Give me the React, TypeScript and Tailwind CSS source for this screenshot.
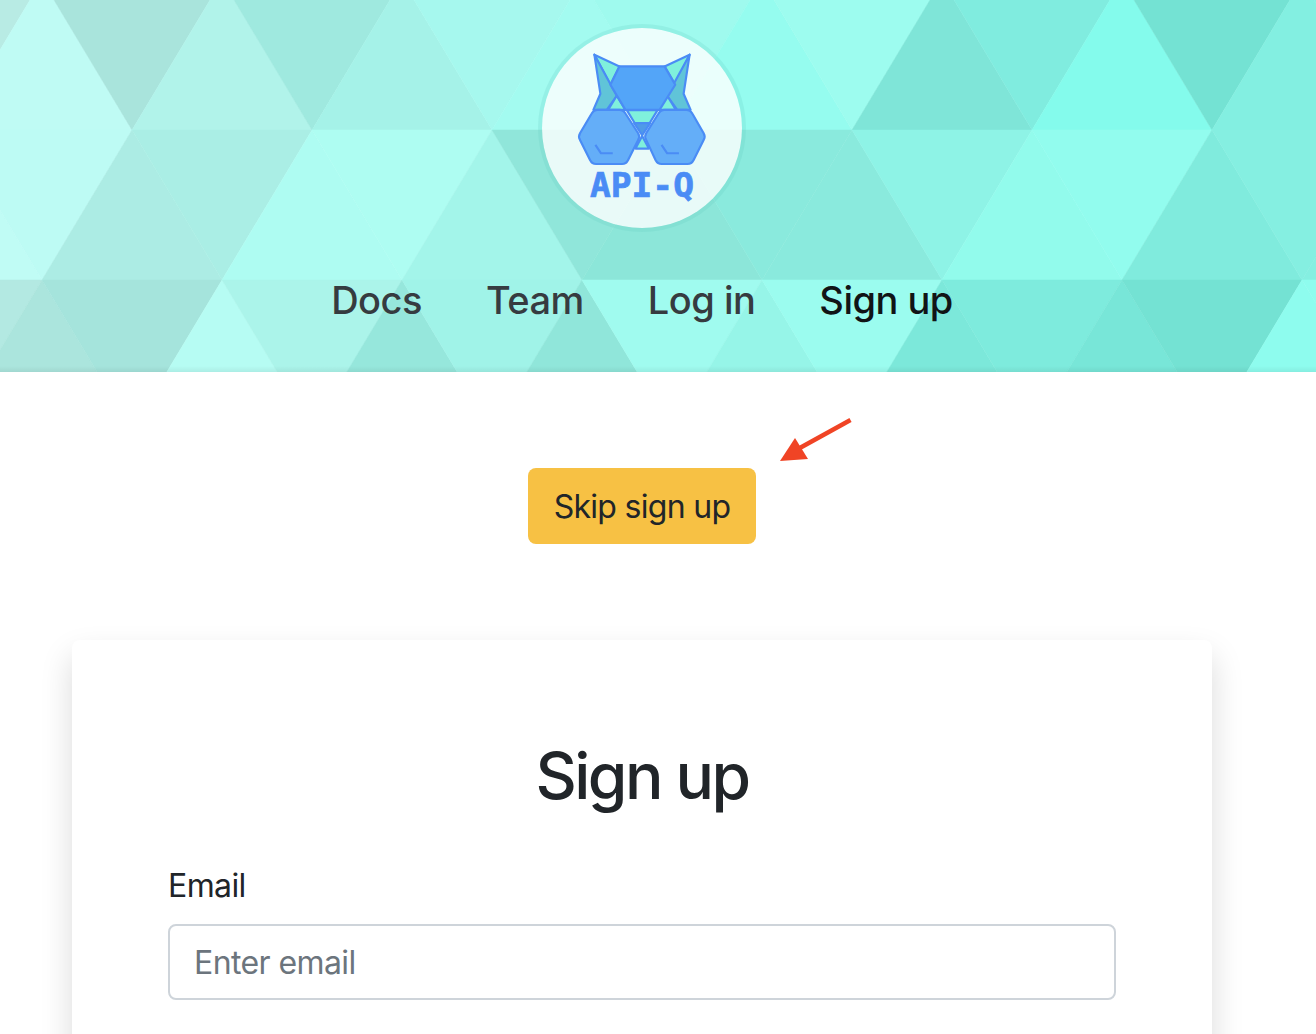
const navItems = [
  { label: 'Docs', active: false },
  { label: 'Team', active: false },
  { label: 'Log in', active: false },
  { label: 'Sign up', active: true },
]

// triangle colours, left to right, one list per row of the header pattern
const rows = [
  { top: -20, startUp: false, colors: ['#b8ebe4', '#bffbf4', '#a9e4dc', '#b1f3ea', '#9fe9df', '#a5f2e8', '#a6f8ee', '#a3fbf0', '#9ffaee', '#95fcef', '#9dfcef', '#7fe5d8', '#80ecdf', '#84fbec', '#74e2d3', '#83efe1', '#83efe1'] },
  { top: 130, startUp: true, colors: ['#c0fcf5', '#bdfbf4', '#acece4', '#aaeee5', '#aefcf2', '#aefdf2', '#a3f5ea', '#90e6da', '#8ce6d9', '#8aeadd', '#8aeadd', '#8ef3e6', '#92fbec', '#92fcee', '#80ebdd', '#85efe1', '#85efe1'] },
  { top: 280, startUp: false, colors: ['#b3e9e2', '#abe5dd', '#a5e4dc', '#b6fcf3', '#abf4ea', '#96e7dc', '#a0f3e8', '#90e6da', '#a0fbef', '#96f5e8', '#9bfcef', '#7ce8da', '#7eebdd', '#78e6d8', '#74e2d3', '#8efcee', '#8efcee'] },
]

function HeaderPattern() {
  return (
    <svg className="absolute inset-0 w-full h-full" viewBox="0 0 1316 372" preserveAspectRatio="none" aria-hidden="true">
      <defs>
        <linearGradient id="edge" x1="0" y1="0" x2="0" y2="1">
          <stop offset="0" stopColor="#000" stopOpacity="0" />
          <stop offset="1" stopColor="#000" stopOpacity="0.06" />
        </linearGradient>
      </defs>
      {rows.map((row) =>
        row.colors.map((color, i) => {
          const apex = -48 + i * 90
          const isUp = i % 2 === (row.startUp ? 0 : 1)
          const tipY = isUp ? row.top : row.top + 150
          const baseY = isUp ? row.top + 150 : row.top
          return (
            <polygon
              key={`${row.top}-${i}`}
              points={`${apex},${tipY} ${apex - 90},${baseY} ${apex + 90},${baseY}`}
              fill={color}
              stroke={color}
              strokeWidth="0.5"
            />
          )
        })
      )}
      <rect x="0" y="366" width="1316" height="6" fill="url(#edge)" />
    </svg>
  )
}

function LogoMark() {
  const stroke = '#4a8cf5'
  return (
    <svg width="132" height="115" viewBox="140 108 395 342" fill="none" aria-hidden="true">
      <g stroke={stroke} strokeWidth="6.5" strokeLinejoin="round">
        {/* ears */}
        <path d="M195 115 L270 150 L243 205 Z" fill="#7ff0dc" />
        <path d="M480 115 L405 150 L437 205 Z" fill="#7ff0dc" />
        <path d="M195 115 L262 238 L232 280 L192 280 L213 232 Z" fill="#60c4d8" />
        <path d="M480 115 L413 238 L443 280 L483 280 L462 232 Z" fill="#60c4d8" />
        <path d="M262 238 L236 280 L288 280 Z" fill="#7ff0dc" />
        <path d="M413 238 L387 280 L439 280 Z" fill="#7ff0dc" />
        {/* head */}
        <path d="M270 150 L405 150 L437 205 L390 280 L288 280 L243 205 Z" fill="#53a5f8" />
        {/* nose */}
        <path d="M292 281 L384 281 L360 320 L316 320 Z" fill="#7ff0dc" />
        <path d="M314 320 L362 320 L338 356 Z" fill="#4f9ae8" />
        <path d="M338 358 L358 396 L318 396 Z" fill="#7ff0dc" />
        {/* eyes */}
        <path d="M205 280 L270 280 Q282 280 288 291 L326 350 Q332 360 326 370 L296 430 Q290 442 278 442 L200 442 Q188 442 182 430 L152 370 Q146 360 152 350 L187 291 Q193 280 205 280 Z" fill="#64aef8" />
        <path d="M405 280 L470 280 Q482 280 488 291 L522 350 Q528 360 522 370 L492 430 Q486 442 474 442 L396 442 Q384 442 378 430 L350 370 Q344 360 350 350 L387 291 Q393 280 405 280 Z" fill="#64aef8" />
        <path d="M198 385 L215 410 L250 410" />
        <path d="M396 385 L413 410 L448 410" />
      </g>
    </svg>
  )
}

export default function App() {
  return (
    <div className="relative h-[1034px] overflow-hidden bg-white font-['Inter','Liberation_Sans',sans-serif] text-[#212529]">
      <header className="relative h-[372px] pr-[32px]">
        <HeaderPattern />
        <div className="relative flex flex-col items-center pt-[24px]">
          <div className="w-[208px] h-[208px] rounded-full border-4 border-[#5fc9bd]/20 bg-white/80 bg-clip-padding flex flex-col items-center pt-[24px]">
            <LogoMark />
            <span className="font-['DejaVu_Sans_Mono','Liberation_Mono',monospace] font-bold text-[34.5px] leading-[38px] -mt-[1px] [-webkit-text-stroke:0.7px_#4a8cf5] text-[#4a8cf5]">API-Q</span>
          </div>
          <nav className="flex items-center gap-[64px] mt-[44px] text-[38px] leading-[48px] tracking-[-0.5px] font-medium">
            {navItems.map((item) => (
              <a key={item.label} href="#" className={item.active ? 'text-[#111416]' : 'text-[#363b40]'}>
                {item.label}
              </a>
            ))}
          </nav>
        </div>
      </header>

      <main className="pr-[32px] flex flex-col items-center pt-[96px]">
        <div className="relative">
          <button className="block h-[76px] w-[228px] rounded-[8px] bg-[#f7c144] pt-[2px] text-[32px] leading-[48px] tracking-[-0.7px] text-[#212529]">Skip sign up</button>
          {/* annotation arrow */}
          <svg className="absolute left-[246px] top-[-52px]" width="80" height="50" viewBox="0 0 80 50" aria-hidden="true">
            <path d="M76.5 4 L24 33" stroke="#f04425" strokeWidth="4.5" />
            <path d="M6 45 L21 22 L34 43 Z" fill="#f04425" />
          </svg>
        </div>

        <section className="mt-[96px] w-[1140px] h-[700px] rounded-[8px] bg-white shadow-[0_16px_32px_rgba(0,0,0,0.15)] px-[96px] pt-[98px]">
          <h2 className="text-center text-[64px] leading-[76px] font-medium tracking-[-2.5px]">Sign up</h2>
          <form className="mt-[48px]">
            <label className="block text-[32px] leading-[48px] tracking-[-0.6px]" htmlFor="email">Email</label>
            <input
              id="email"
              type="email"
              placeholder="Enter email"
              className="mt-[14px] block w-full h-[76px] rounded-[8px] border-2 border-[#ced4da] px-[24px] text-[32px] leading-[48px] tracking-[-0.6px] placeholder:text-[#6c757d] outline-none"
            />
          </form>
        </section>
      </main>
    </div>
  )
}
